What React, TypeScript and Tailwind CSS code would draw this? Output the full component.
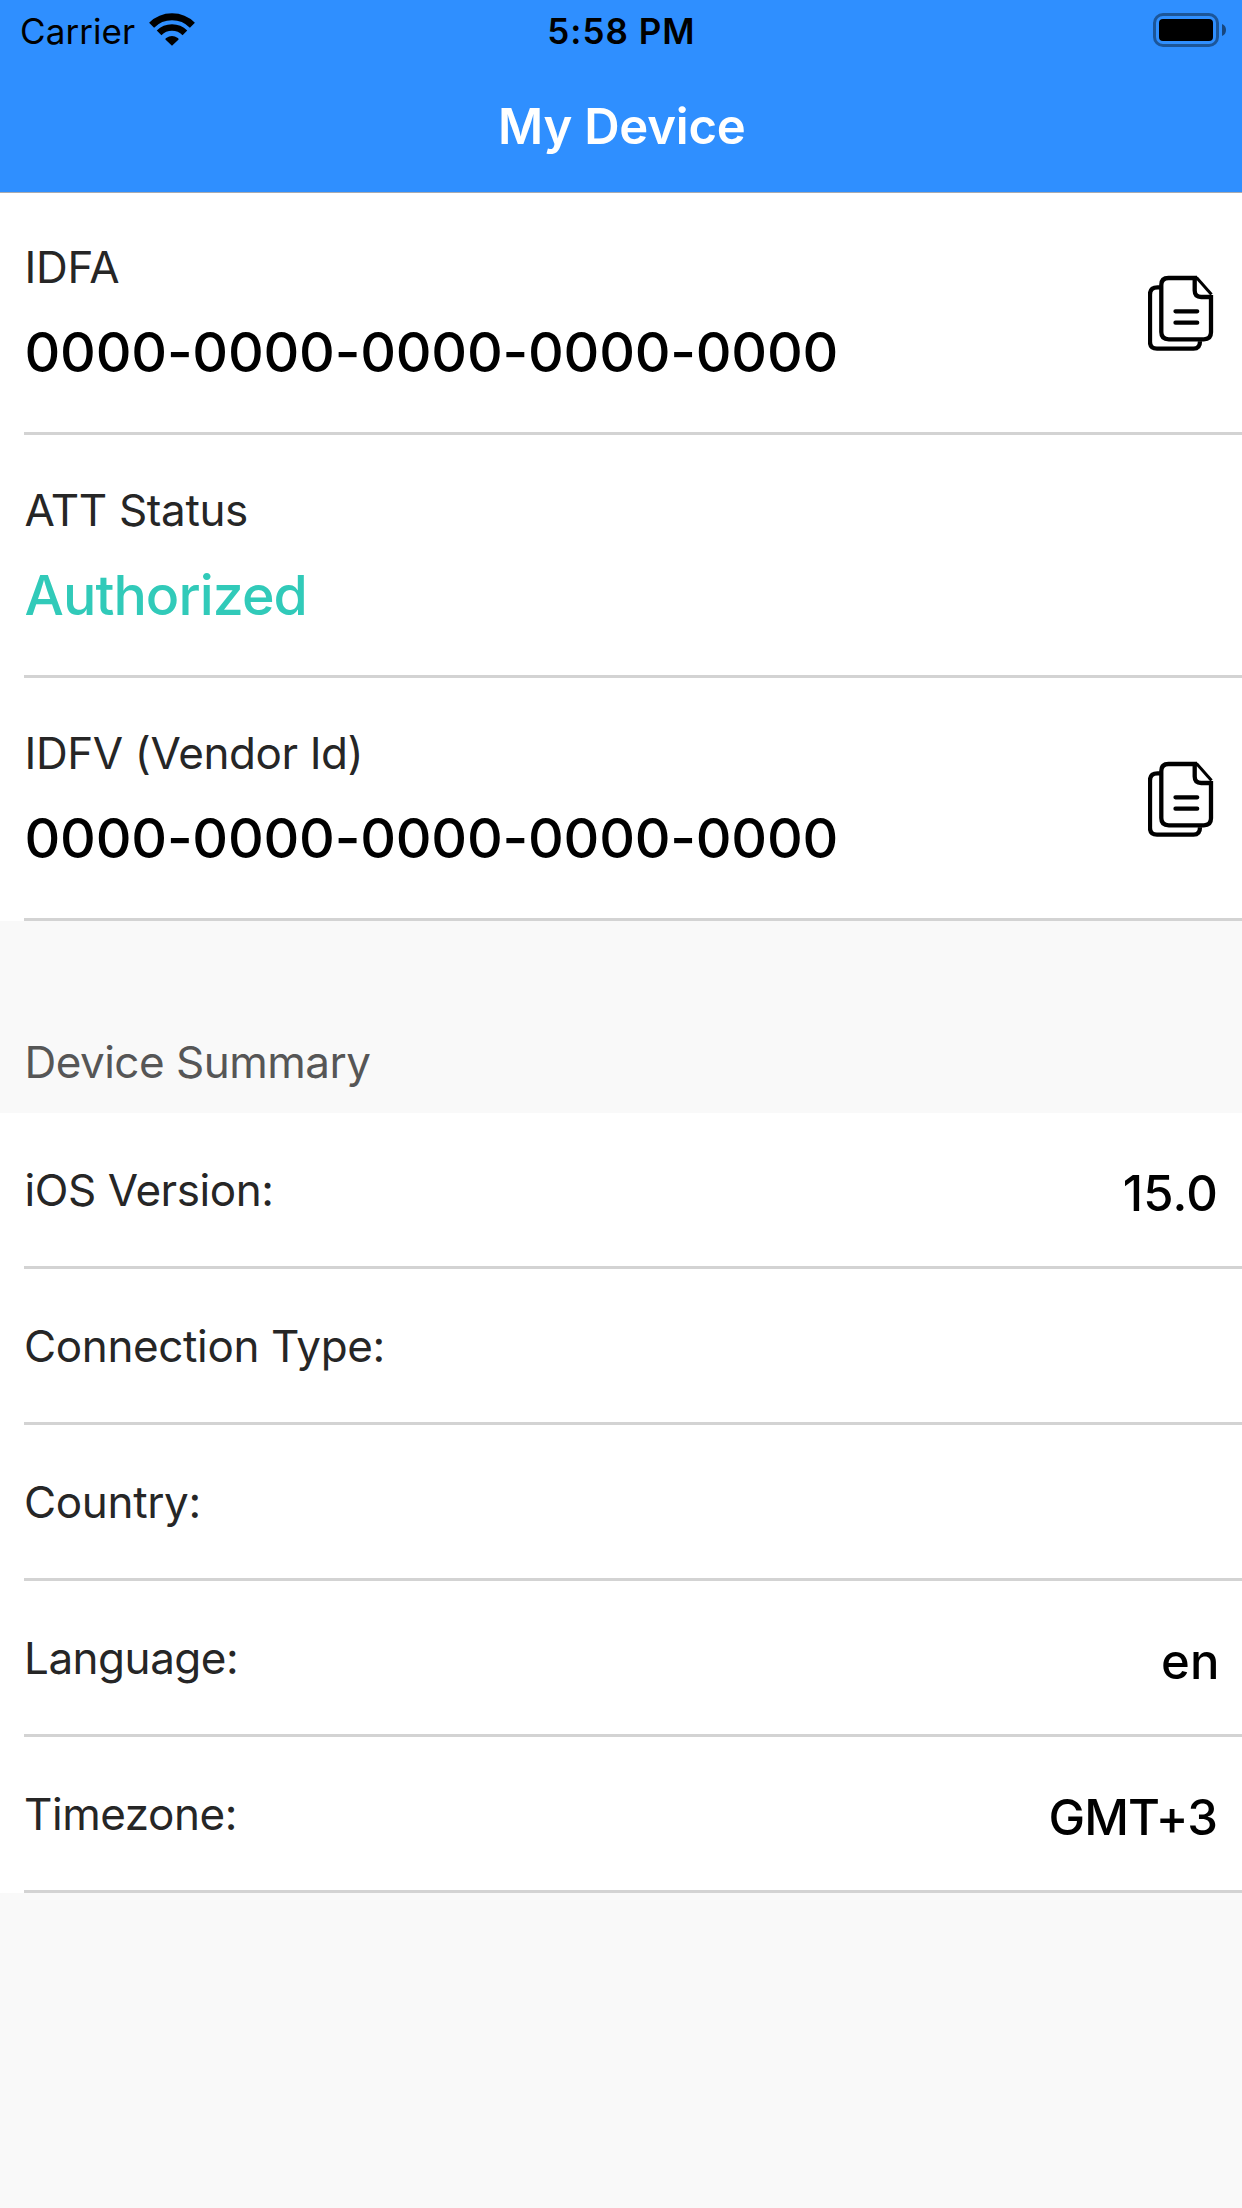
function WifiIcon() {
  return (
    <svg className="ml-[14px] mt-[13px] h-[33px] w-[46px]" viewBox="0 0 46 33" fill="none" stroke="#000">
      <path d="M2.6 12.2a28.8 28.8 0 0 1 40.8 0" strokeWidth="7" />
      <path d="M10.1 19.9a18.2 18.2 0 0 1 25.8 0" strokeWidth="6.6" />
      <path d="M23 32.8l-6.6-6.4q0-.8.8-1.3a9.6 9.6 0 0 1 11.6 0q.8.5.8 1.3z" fill="#000" stroke="none" />
    </svg>
  );
}

function BatteryIcon() {
  return (
    <div className="flex h-[34px] items-center">
      <div className="h-[34px] w-[66px] rounded-[10px] border-[3px] border-black/40 p-[3px]">
        <div className="h-[22px] w-[54px] rounded-[4px] bg-black" />
      </div>
      <svg className="ml-[3px] h-[12px] w-[4px]" viewBox="0 0 4 12">
        <path d="M0 0Q4 1.5 4 6T0 12z" fill="#000" fillOpacity="0.5" />
      </svg>
    </div>
  );
}

function CopyIcon() {
  return (
    <svg className="mt-px h-[76px] w-[66px]" viewBox="0 0 66 76" fill="none" stroke="#000" strokeWidth="4.3" strokeLinejoin="round">
      <path d="M13 12.3H9.5Q2 12.3 2 19.5V67q0 6.7 7 6.7h36.5q6.500 0 6.500-7.500" />
      <path d="M49 3H20.500q-7.200 0-7.200 7v47q0 7.300 7.500 7.300h35q7.200 0 7.200-7V20" />
      <path d="M46.700 3v12.500q0 6.500 6.500 6.500H63" />
      <path d="M48.500 2.500L63.500 19.500" strokeWidth="3" />
      <path d="M27.500 36.300h21.700M27.500 47.700h21.700" strokeLinecap="round" />
    </svg>
  );
}

type IdRowProps = { label: string; labelClass: string; value: string; valueClass: string; copy?: boolean };

function IdRow({ label, labelClass, value, valueClass, copy }: IdRowProps) {
  return (
    <div className="ml-6 flex h-[243px] items-center justify-between border-b-[3px] border-[#d3d3d3] pr-7">
      <div className="h-full pt-[45px] pl-[0.5px] whitespace-nowrap">
        <div className={`text-[44px] leading-[60px] text-[#262626] ${labelClass}`}>{label}</div>
        <div className={`mt-5 text-[55.5px] leading-[70px] font-medium ${valueClass}`}>{value}</div>
      </div>
      {copy && <CopyIcon />}
    </div>
  );
}

type SummaryRowProps = { label: string; labelClass: string; value?: string; valueClass?: string };

function SummaryRow({ label, labelClass, value, valueClass = "" }: SummaryRowProps) {
  return (
    <div className="ml-6 flex h-[156px] justify-between border-b-[3px] border-[#d3d3d3] whitespace-nowrap">
      <div className={`pt-[47px] text-[44px] leading-[60px] text-[#262626] ${labelClass}`}>{label}</div>
      {value && <div className={`pt-[51px] text-[49px] leading-[60px] font-medium text-black ${valueClass}`}>{value}</div>}
    </div>
  );
}

export default function App() {
  return (
    <div className="h-[2208px] w-[1242px] overflow-hidden bg-[#f9f9f9] font-['Inter',sans-serif]">
      <header className="relative z-10 h-[193px] border-b border-[#a9abb0] bg-[#2f8fff]">
        <div className="grid h-[60px] grid-cols-3 text-[35px] leading-[60px] text-black">
          <div className="flex pl-5">
            <span className="pt-px tracking-[0.08px]">Carrier</span>
            <WifiIcon />
          </div>
          <div className="pt-px pl-px text-center font-semibold tracking-[1px]">5:58 PM</div>
          <div className="flex justify-end pt-[13px] pr-4">
            <BatteryIcon />
          </div>
        </div>
        <h1 className="pt-[37px] pl-[1.5px] text-center text-[49px] leading-[60px] font-[560] tracking-[-0.2px] text-white">
          My Device
        </h1>
      </header>

      <section className="-mt-px bg-white">
        <IdRow label="IDFA" labelClass="tracking-[-0.25px]" value="0000-0000-0000-0000-0000" valueClass="tracking-[-0.23px] text-black" copy />
        <IdRow label="ATT Status" labelClass="tracking-[-0.35px]" value="Authorized" valueClass="tracking-[-0.93px] text-[#31cab9]" />
        <IdRow label="IDFV (Vendor Id)" labelClass="tracking-[-0.4px]" value="0000-0000-0000-0000-0000" valueClass="tracking-[-0.23px] text-black" copy />
      </section>

      <h2 className="h-[192px] pt-[111px] pl-[24.5px] text-[44px] leading-[60px] tracking-[-0.52px] text-[#565656]">
        Device Summary
      </h2>

      <section className="bg-white">
        <SummaryRow label="iOS Version:" labelClass="pl-[0.5px] tracking-[-0.43px]" value="15.0" valueClass="pr-6 tracking-[0.2px]" />
        <SummaryRow label="Connection Type:" labelClass="tracking-[-0.37px]" />
        <SummaryRow label="Country:" labelClass="tracking-[-0.35px]" />
        <SummaryRow label="Language:" labelClass="tracking-[-0.49px]" value="en" valueClass="pr-[22.5px] tracking-[0.1px]" />
        <SummaryRow label="Timezone:" labelClass="tracking-[-0.45px]" value="GMT+3" valueClass="pr-[25px] tracking-[-0.9px]" />
      </section>
    </div>
  );
}
